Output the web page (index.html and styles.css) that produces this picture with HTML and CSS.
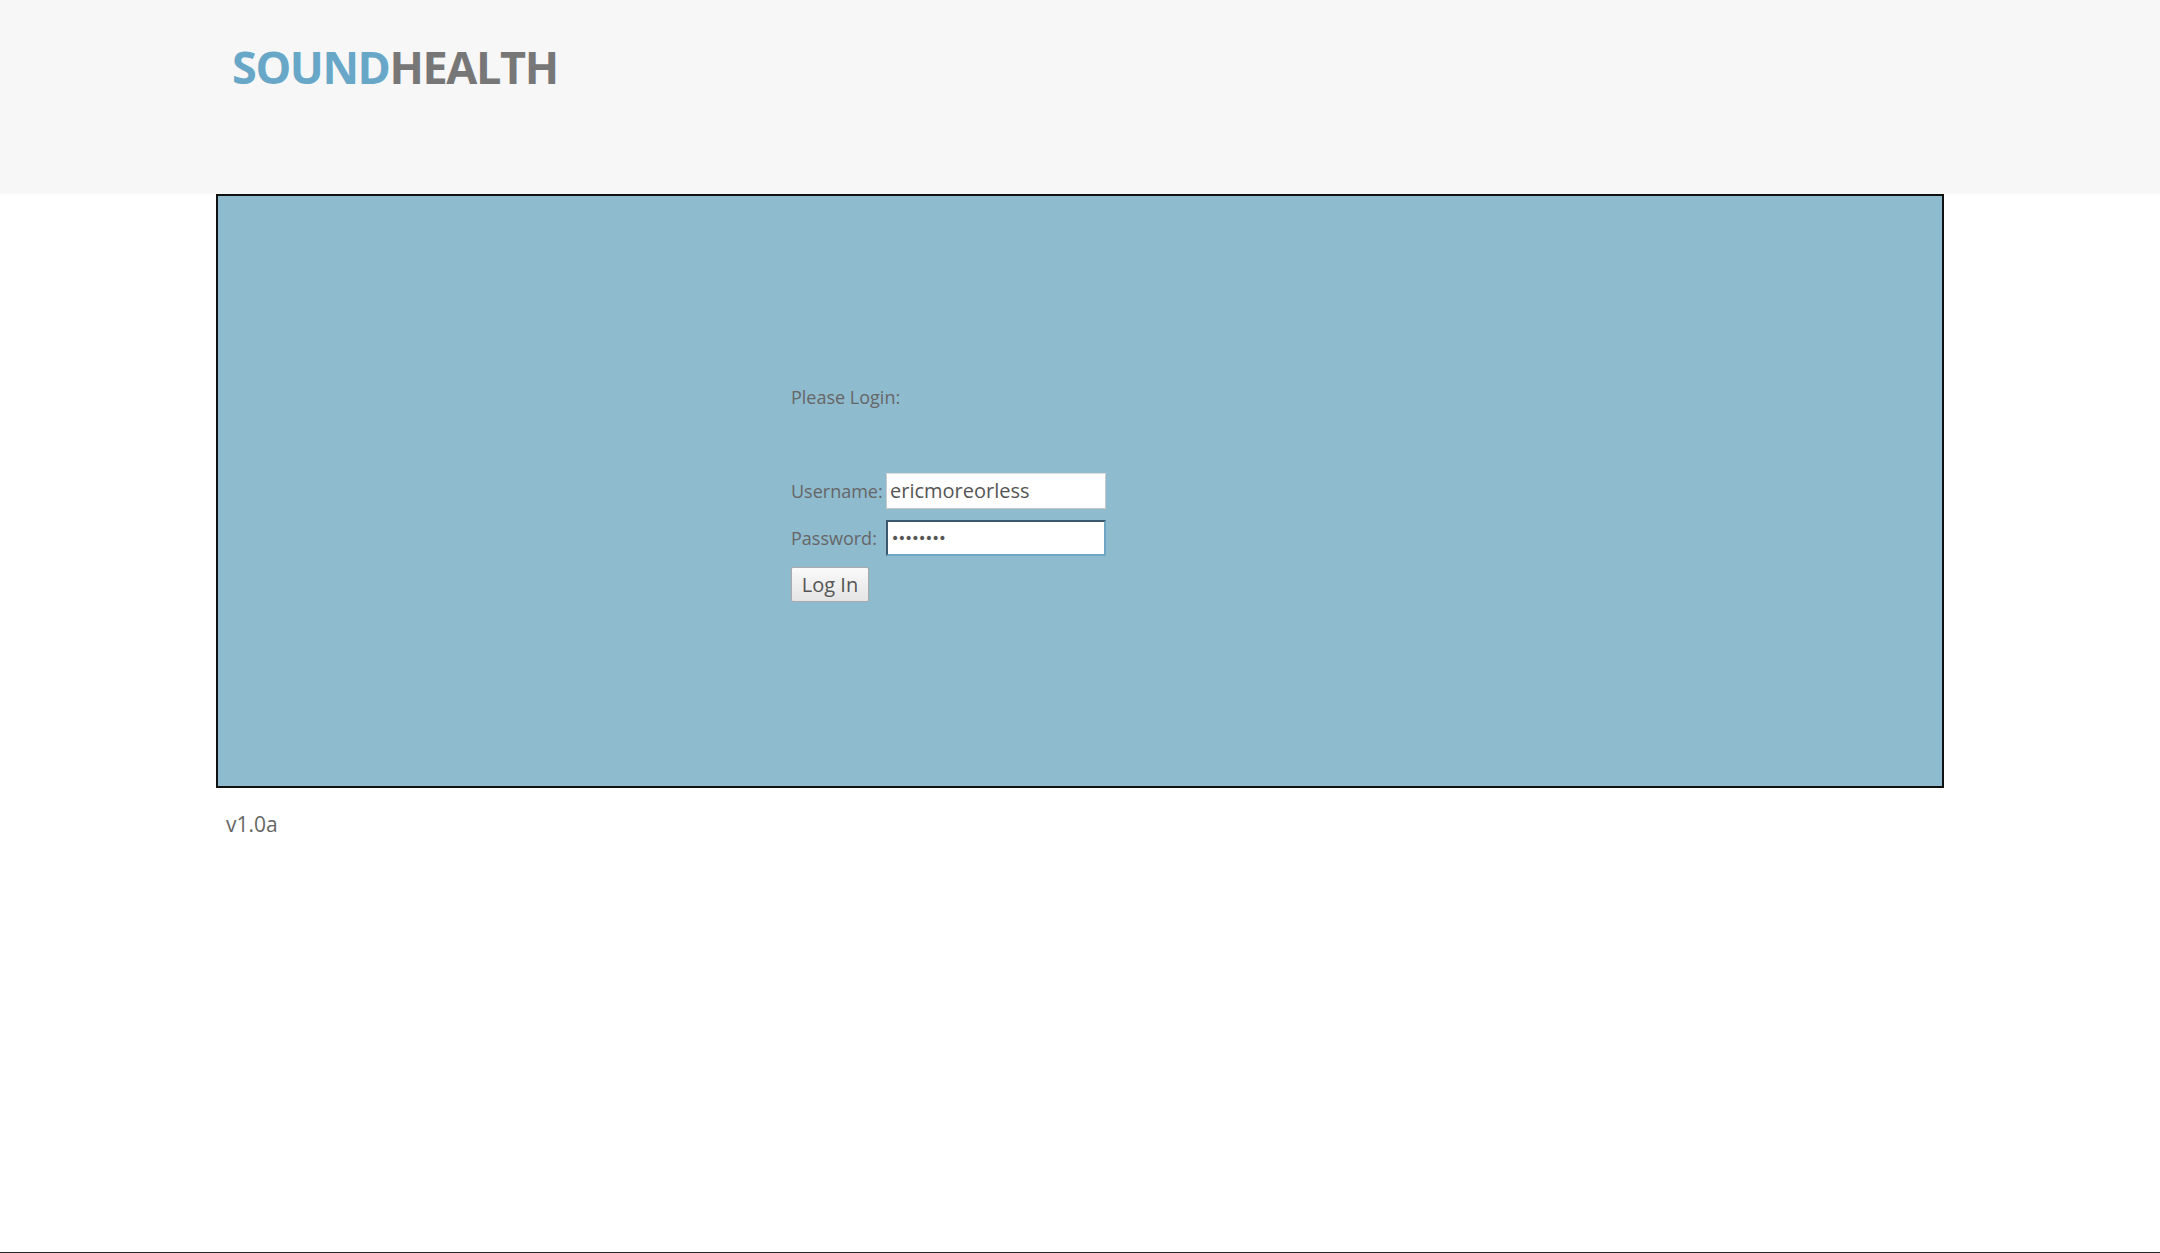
FILE: index.html
```html
<!DOCTYPE html>
<html>
<head>
<meta charset="utf-8">
<link rel="stylesheet" href="styles.css">
</head>
<body>
<div class="page">
  <header class="header">
    <div class="logo"><span class="logo-a">SOUND</span><span class="logo-b">HEALTH</span></div>
  </header>
  <main class="panel">
    <div class="form">
      <div class="prompt">Please Login:</div>
      <div class="row"><label class="lbl">Username:</label><input class="field" type="text" value="ericmoreorless"></div>
      <div class="row"><label class="lbl">Password:</label><input class="field field-focus" type="password" value="secretpw"></div>
      <button class="btn">Log In</button>
    </div>
  </main>
  <div class="version">v1.0a</div>
  <div class="spacer"></div>
</div>
</body>
</html>
```
FILE: styles.css
```css
html, body { margin: 0; padding: 0; height: 100%; }
body { font-family: "Open Sans", "Liberation Sans", sans-serif; color: #666; background: #fff; }
.page { min-height: 100%; display: flex; flex-direction: column; box-sizing: border-box; border-bottom: 1px solid #222; }
.header { background: #f7f7f7; height: 194px; box-sizing: border-box; padding: 36px 0 0 232px; }
.logo { font-size: 45px; font-weight: 700; letter-spacing: -1.4px; line-height: 62px; }
.logo-a { color: #68a7c7; }
.logo-b { color: #777; }
.panel { margin-left: 216px; width: 1728px; height: 594px; box-sizing: border-box; border: 2px solid #111; background: #8fbbcf; padding: 189px 0 0 573px; }
.form { display: flex; flex-direction: column; align-items: flex-start; }
.prompt { font-size: 18px; line-height: 24px; color: #666; margin-bottom: 64px; }
.row { display: flex; align-items: center; margin-bottom: 11px; }
.lbl { font-size: 18px; color: #666; width: 95px; }
.field { width: 220px; height: 36px; box-sizing: border-box; border: 1px solid #c8c8c8; border-top-color: #ddd; background: #fff; font-family: "Open Sans", sans-serif; font-size: 20px; color: #555; padding: 0 3px 2px; margin: 0; outline: none; }
.field-focus { border: 2px solid; border-color: #3c5a6d #6fa6c4 #6fa6c4 #3c5a6d; font-family: "DejaVu Sans", sans-serif; font-size: 14px; letter-spacing: -1.5px; color: #555; padding: 0 3px; }
.btn { font-family: "Open Sans", sans-serif; font-size: 20px; color: #555; height: 35px; width: 78px; padding: 0; border: 1px solid #aaa; border-radius: 2px; background: linear-gradient(#fafafa, #e4e4e4); }
.version { margin: 22px 0 0 226px; font-size: 21px; color: #666; }
.spacer { flex: 1; }
```
